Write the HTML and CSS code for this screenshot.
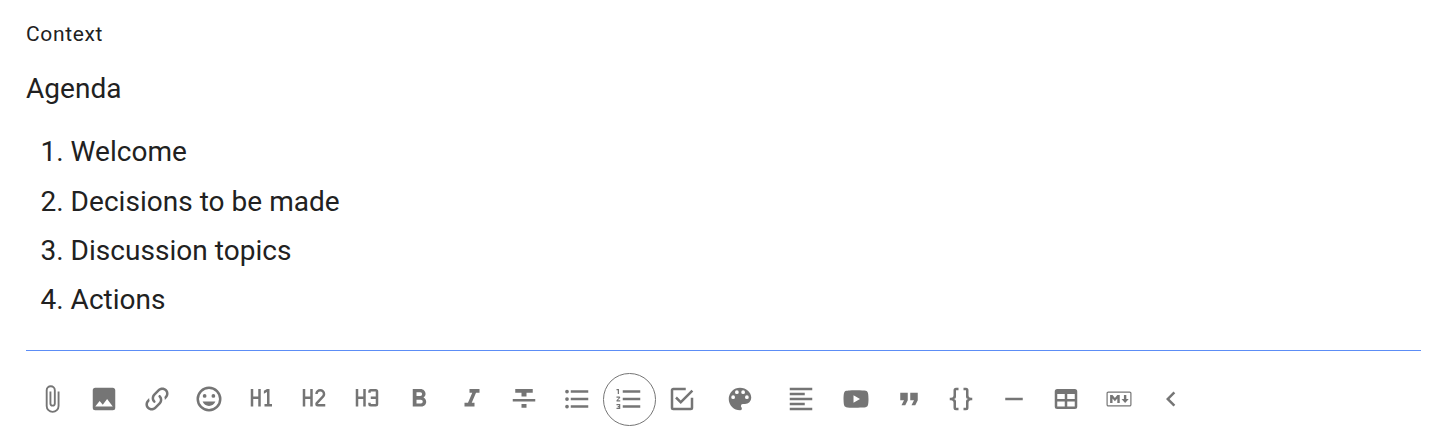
FILE: index.html
```html
<!DOCTYPE html>
<html lang="en">
<head>
<meta charset="utf-8">
<title>Context</title>
<link rel="stylesheet" href="styles.css">
</head>
<body>
<main class="editor">
  <div class="label">Context</div>
  <div class="content">
    <p class="paragraph">Agenda</p>
    <ol class="list">
      <li>Welcome</li>
      <li>Decisions to be made</li>
      <li>Discussion topics</li>
      <li>Actions</li>
    </ol>
  </div>
  <div class="toolbar">
    <button class="tool" aria-label="Attach"><svg class="icon" viewBox="0 0 24 24"><path d="M16.5,6V17.5A4,4 0 0,1 12.5,21.5A4,4 0 0,1 8.5,17.5V5A2.5,2.5 0 0,1 11,2.5A2.5,2.5 0 0,1 13.5,5V15.5A1,1 0 0,1 12.5,16.5A1,1 0 0,1 11.5,15.5V6H10V15.5A2.5,2.5 0 0,0 12.5,18A2.5,2.5 0 0,0 15,15.5V5A4,4 0 0,0 11,1A4,4 0 0,0 7,5V17.5A5.5,5.5 0 0,0 12.5,23A5.5,5.5 0 0,0 18,17.5V6H16.5Z"/></svg></button>
    <button class="tool" aria-label="Image"><svg class="icon" viewBox="0 0 24 24"><path d="M8.5,13.5L11,16.5L14.5,12L19,18H5M21,19V5C21,3.89 20.1,3 19,3H5A2,2 0 0,0 3,5V19A2,2 0 0,0 5,21H19A2,2 0 0,0 21,19Z"/></svg></button>
    <button class="tool" aria-label="Link"><svg class="icon" viewBox="0 0 24 24"><path d="M10.59,13.41C11,13.8 11,14.44 10.59,14.83C10.2,15.22 9.56,15.22 9.17,14.83C7.22,12.88 7.22,9.71 9.17,7.76L12.71,4.22C14.66,2.27 17.83,2.27 19.78,4.22C21.73,6.17 21.73,9.34 19.78,11.29L18.29,12.78C18.3,11.96 18.17,11.14 17.89,10.36L18.36,9.88C19.54,8.71 19.54,6.81 18.36,5.64C17.19,4.46 15.29,4.46 14.12,5.64L10.59,9.17C9.41,10.34 9.41,12.24 10.59,13.41M13.41,9.17C13.8,8.78 14.44,8.78 14.83,9.17C16.78,11.12 16.78,14.29 14.83,16.24L11.29,19.78C9.34,21.73 6.17,21.73 4.22,19.78C2.27,17.83 2.27,14.66 4.22,12.71L5.71,11.22C5.7,12.04 5.83,12.86 6.11,13.65L5.64,14.12C4.46,15.29 4.46,17.19 5.64,18.36C6.81,19.54 8.71,19.54 9.88,18.36L13.41,14.83C14.59,13.66 14.59,11.76 13.41,10.59C13,10.2 13,9.56 13.41,9.17Z"/></svg></button>
    <button class="tool" aria-label="Emoji"><svg class="icon" viewBox="0 0 24 24"><path d="M20,12A8,8 0 0,0 12,4A8,8 0 0,0 4,12A8,8 0 0,0 12,20A8,8 0 0,0 20,12M22,12A10,10 0 0,1 12,22A10,10 0 0,1 2,12A10,10 0 0,1 12,2A10,10 0 0,1 22,12M10,9.5A1.5,1.5 0 0,1 7,9.5A1.5,1.5 0 0,1 10,9.5M17,9.5A1.5,1.5 0 0,1 14,9.5A1.5,1.5 0 0,1 17,9.5M12,17.5C14.33,17.5 16.3,16.04 17.11,14H6.89C7.69,16.04 9.67,17.5 12,17.5Z"/></svg></button>
    <button class="tool" aria-label="Heading 1"><svg class="icon" viewBox="0 0 24 24"><path d="M3,4H5V10H9V4H11V18H9V12H5V18H3V4M14,18V16H16V6.31L13.5,7.75V5.44L16,4H18V16H20V18H14Z"/></svg></button>
    <button class="tool" aria-label="Heading 2"><svg class="icon" viewBox="0 0 24 24"><path d="M3,4H5V10H9V4H11V18H9V12H5V18H3V4M21,18H15A2,2 0 0,1 13,16C13,15.47 13.2,15 13.54,14.64L18.41,9.41C18.78,9.05 19,8.55 19,8A2,2 0 0,0 17,6A2,2 0 0,0 15,8H13A4,4 0 0,1 17,4A4,4 0 0,1 21,8C21,9.1 20.55,10.1 19.83,10.83L15,16H21V18Z"/></svg></button>
    <button class="tool" aria-label="Heading 3"><svg class="icon" viewBox="0 0 24 24"><path d="M3,4H5V10H9V4H11V18H9V12H5V18H3V4M15,4H19A2,2 0 0,1 21,6V16A2,2 0 0,1 19,18H15A2,2 0 0,1 13,16V15H15V16H19V12H15V10H19V6H15V7H13V6A2,2 0 0,1 15,4Z"/></svg></button>
    <button class="tool" aria-label="Bold"><svg class="icon" viewBox="0 0 24 24"><path d="M13.5,15.5H10V12.5H13.5A1.5,1.5 0 0,1 15,14A1.5,1.5 0 0,1 13.5,15.5M10,6.5H13A1.5,1.5 0 0,1 14.5,8A1.5,1.5 0 0,1 13,9.5H10M15.6,10.79C16.57,10.11 17.25,9 17.25,8C17.25,5.74 15.5,4 13.25,4H7V18H14.04C16.14,18 17.75,16.3 17.75,14.21C17.75,12.69 16.89,11.39 15.6,10.79Z"/></svg></button>
    <button class="tool" aria-label="Italic"><svg class="icon" viewBox="0 0 24 24"><path d="M10,4V7H12.21L8.79,15H6V18H14V15H11.79L15.21,7H18V4H10Z"/></svg></button>
    <button class="tool" aria-label="Strikethrough"><svg class="icon" viewBox="0 0 24 24"><path d="M3,14H21V12H3M5,4V7H10V10H14V7H19V4M10,19H14V16H10V19Z"/></svg></button>
    <button class="tool" aria-label="Bulleted list"><svg class="icon" viewBox="0 0 24 24"><path d="M7,5H21V7H7V5M7,13V11H21V13H7M4,4.5A1.5,1.5 0 0,1 4,7.5A1.5,1.5 0 0,1 4,4.5M4,10.5A1.5,1.5 0 0,1 4,13.5A1.5,1.5 0 0,1 4,10.5M7,19V17H21V19H7M4,16.5A1.5,1.5 0 0,1 4,19.5A1.5,1.5 0 0,1 4,16.5Z"/></svg></button>
    <button class="tool tool-active" aria-label="Numbered list"><svg class="icon" viewBox="0 0 24 24"><path d="M7,13V11H21V13H7M7,19V17H21V19H7M7,7V5H21V7H7M3,8V5H2V4H4V8H3M2,17V16H5V20H2V19H4V18.5H3V17.5H4V17H2M4.25,10A0.75,0.75 0 0,1 5,10.75C5,10.95 4.92,11.14 4.79,11.27L3.12,13H5V14H2V13.08L4,11H2V10H4.25Z"/></svg></button>
    <button class="tool" aria-label="Task list"><svg class="icon" viewBox="0 0 24 24"><path d="M19,19H5V5H15V3H5C3.89,3 3,3.89 3,5V19A2,2 0 0,0 5,21H19A2,2 0 0,0 21,19V11H19M7.91,10.08L6.5,11.5L11,16L21,6L19.59,4.58L11,13.17L7.91,10.08Z"/></svg></button>
    <button class="tool tool-color" aria-label="Text color"><svg class="icon" viewBox="0 0 24 24"><path d="M17.5,12A1.5,1.5 0 0,1 17.5,9A1.5,1.5 0 0,1 17.5,12M14.5,8A1.5,1.5 0 0,1 14.5,5A1.5,1.5 0 0,1 14.5,8M9.5,8A1.5,1.5 0 0,1 9.5,5A1.5,1.5 0 0,1 9.5,8M6.5,12A1.5,1.5 0 0,1 6.5,9A1.5,1.5 0 0,1 6.5,12M12,3A9,9 0 0,0 3,12A9,9 0 0,0 12,21A1.5,1.5 0 0,0 13.5,19.5C13.5,19.11 13.35,18.76 13.11,18.5C12.88,18.23 12.73,17.88 12.73,17.5A1.5,1.5 0 0,1 14.23,16H16A5,5 0 0,0 21,11C21,6.58 16.97,3 12,3Z"/></svg></button>
    <button class="tool tool-align" aria-label="Align left"><svg class="icon" viewBox="0 0 24 24"><path d="M3,3H21V5H3V3M3,7H15V9H3V7M3,11H21V13H3V11M3,15H15V17H3V15M3,19H21V21H3V19Z"/></svg></button>
    <button class="tool" aria-label="Video"><svg class="icon" viewBox="0 0 24 24"><path d="M10,15L15.19,12L10,9V15M21.56,7.17C21.69,7.64 21.78,8.27 21.84,9.07C21.91,9.87 21.94,10.56 21.94,11.16L22,12C22,14.19 21.84,15.8 21.56,16.83C21.31,17.73 20.73,18.31 19.83,18.56C19.36,18.69 18.5,18.78 17.18,18.84C15.88,18.91 14.69,18.94 13.59,18.94L12,19C7.81,19 5.2,18.84 4.17,18.56C3.27,18.31 2.69,17.73 2.44,16.83C2.31,16.36 2.22,15.73 2.16,14.93C2.09,14.13 2.06,13.44 2.06,12.84L2,12C2,9.81 2.16,8.2 2.44,7.17C2.69,6.27 3.27,5.69 4.17,5.44C4.64,5.31 5.5,5.22 6.82,5.16C8.12,5.09 9.31,5.06 10.41,5.06L12,5C16.19,5 18.8,5.16 19.83,5.44C20.73,5.69 21.31,6.27 21.56,7.17Z"/></svg></button>
    <button class="tool" aria-label="Quote"><svg class="icon" viewBox="0 0 24 24"><path d="M14,17H17L19,13V7H13V13H16M6,17H9L11,13V7H5V13H8L6,17Z"/></svg></button>
    <button class="tool" aria-label="Code"><svg class="icon" viewBox="0 0 24 24"><path d="M8,3A2,2 0 0,0 6,5V9A2,2 0 0,1 4,11H3V13H4A2,2 0 0,1 6,15V19A2,2 0 0,0 8,21H10V19H8V14A2,2 0 0,0 6,12A2,2 0 0,0 8,10V5H10V3M16,3A2,2 0 0,1 18,5V9A2,2 0 0,0 20,11H21V13H20A2,2 0 0,0 18,15V19A2,2 0 0,1 16,21H14V19H16V14A2,2 0 0,1 18,12A2,2 0 0,1 16,10V5H14V3H16Z"/></svg></button>
    <button class="tool" aria-label="Divider"><svg class="icon" viewBox="0 0 24 24"><path d="M19,13H5V11H19V13Z"/></svg></button>
    <button class="tool" aria-label="Table"><svg class="icon" viewBox="0 0 24 24"><path d="M5,4H19A2,2 0 0,1 21,6V18A2,2 0 0,1 19,20H5A2,2 0 0,1 3,18V6A2,2 0 0,1 5,4M5,8V12H11V8H5M13,8V12H19V8H13M5,14V18H11V14H5M13,14V18H19V14H13Z"/></svg></button>
    <button class="tool" aria-label="Markdown"><svg class="icon" viewBox="0 0 24 24"><path d="M20.56,18H3.44C2.65,18 2,17.37 2,16.59V7.41C2,6.63 2.65,6 3.44,6H20.56C21.35,6 22,6.63 22,7.41V16.59C22,17.37 21.35,18 20.56,18M3.44,6.94C3.18,6.94 2.96,7.15 2.96,7.41V16.6C2.96,16.85 3.18,17.06 3.44,17.06H20.56C20.82,17.06 21.04,16.85 21.04,16.6V7.41C21.04,7.15 20.82,6.94 20.56,6.94H3.44M4.89,15.19V8.81H6.81L8.73,11.16L10.65,8.81H12.58V15.19H10.65V11.53L8.73,13.88L6.81,11.53V15.19H4.89M16.9,15.19L14,12.09H15.94V8.81H17.86V12.09H19.79L16.9,15.19Z"/></svg></button>
    <button class="tool" aria-label="Collapse"><svg class="icon" viewBox="0 0 24 24"><path d="M15.41,16.58L10.83,12L15.41,7.41L14,6L8,12L14,18L15.41,16.58Z"/></svg></button>
  </div>
</main>
</body>
</html>
```

FILE: styles.css
```css
* {
  box-sizing: border-box;
}

body {
  margin: 0;
  background: #fff;
  color: #212121;
  font-family: Roboto, "Liberation Sans", sans-serif;
}

.editor {
  padding: 17px 28px 0 26px;
}

.label {
  height: 34px;
  font-size: 21px;
  line-height: 34px;
  letter-spacing: 0.03em;
}

.content {
  height: 300px;
  padding-top: 13px;
  border-bottom: 1px solid #5c8df6;
  font-size: 28px;
  line-height: 49.3px;
  letter-spacing: 0.03px;
}

.paragraph {
  margin: 0 0 14.2px;
}

.list {
  margin: 0;
  padding-left: 44.6px;
}

.toolbar {
  display: flex;
  align-items: center;
  margin-left: -0.5px;
  padding-top: 22px;
}

.tool {
  display: flex;
  flex: none;
  align-items: center;
  justify-content: center;
  width: 52.5px;
  height: 52.5px;
  padding: 0 0 1.4px;
  border: 0;
  background: none;
  color: #757575;
}

.tool-active {
  border: 1px solid #757575;
  border-radius: 50%;
}

.tool-color {
  width: 63px;
}

.tool-align {
  width: 59px;
}

.icon {
  width: 30px;
  height: 30px;
  flex: none;
  fill: currentColor;
}
```
